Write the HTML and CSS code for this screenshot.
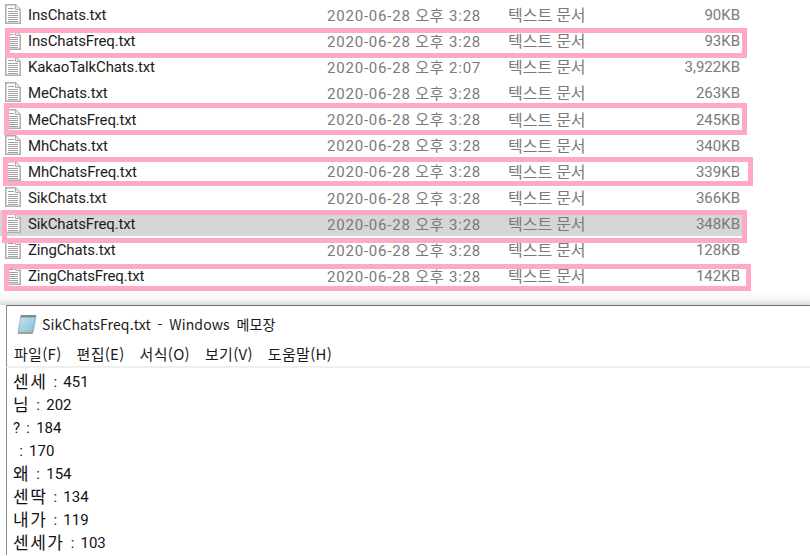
FILE: index.html
```html
<!DOCTYPE html>
<html lang="ko">
<head>
<meta charset="utf-8">
<title>SikChatsFreq.txt</title>
<link rel="stylesheet" href="styles.css">
</head>
<body>

<svg class="defs" width="0" height="0">
	<symbol id="txtIcon" viewBox="0 0 16 20">
		<path d="M.75.75H10.5L15.25 5.5V19.25H.75Z" fill="#fff" stroke="#adadad" stroke-width="1.5"/>
		<path d="M10.5 .75V5.5H15.25" fill="#e6e6e6" stroke="#adadad"/>
		<path d="M3 4.5H9M3 7.5H13M3 9.5H13M3 11.5H13M3 13.5H13M3 15.5H13M3 17.5H13" stroke="#a2a2a2"/>
	</symbol>
	<linearGradient id="padFill" x1="0" y1="0" x2="1" y2="1">
		<stop offset="0" stop-color="#cfe8f3"/>
		<stop offset="1" stop-color="#7fb6cd"/>
	</linearGradient>
</svg>

<div class="fileList">
	<div class="fileRow"><svg class="fileIcon"><use href="#txtIcon"/></svg><span class="fileName">InsChats.txt</span><span class="fileDate">2020-06-28 오후 3:28</span><span class="fileType">텍스트 문서</span><span class="fileSize">90KB</span></div>
	<div class="fileRow"><svg class="fileIcon"><use href="#txtIcon"/></svg><span class="fileName">InsChatsFreq.txt</span><span class="fileDate">2020-06-28 오후 3:28</span><span class="fileType">텍스트 문서</span><span class="fileSize">93KB</span></div>
	<div class="fileRow"><svg class="fileIcon"><use href="#txtIcon"/></svg><span class="fileName">KakaoTalkChats.txt</span><span class="fileDate">2020-06-28 오후 2:07</span><span class="fileType">텍스트 문서</span><span class="fileSize">3,922KB</span></div>
	<div class="fileRow"><svg class="fileIcon"><use href="#txtIcon"/></svg><span class="fileName">MeChats.txt</span><span class="fileDate">2020-06-28 오후 3:28</span><span class="fileType">텍스트 문서</span><span class="fileSize">263KB</span></div>
	<div class="fileRow"><svg class="fileIcon"><use href="#txtIcon"/></svg><span class="fileName">MeChatsFreq.txt</span><span class="fileDate">2020-06-28 오후 3:28</span><span class="fileType">텍스트 문서</span><span class="fileSize">245KB</span></div>
	<div class="fileRow"><svg class="fileIcon"><use href="#txtIcon"/></svg><span class="fileName">MhChats.txt</span><span class="fileDate">2020-06-28 오후 3:28</span><span class="fileType">텍스트 문서</span><span class="fileSize">340KB</span></div>
	<div class="fileRow"><svg class="fileIcon"><use href="#txtIcon"/></svg><span class="fileName">MhChatsFreq.txt</span><span class="fileDate">2020-06-28 오후 3:28</span><span class="fileType">텍스트 문서</span><span class="fileSize">339KB</span></div>
	<div class="fileRow"><svg class="fileIcon"><use href="#txtIcon"/></svg><span class="fileName">SikChats.txt</span><span class="fileDate">2020-06-28 오후 3:28</span><span class="fileType">텍스트 문서</span><span class="fileSize">366KB</span></div>
	<div class="fileRow fileRow-selected"><svg class="fileIcon"><use href="#txtIcon"/></svg><span class="fileName">SikChatsFreq.txt</span><span class="fileDate">2020-06-28 오후 3:28</span><span class="fileType">텍스트 문서</span><span class="fileSize">348KB</span></div>
	<div class="fileRow"><svg class="fileIcon"><use href="#txtIcon"/></svg><span class="fileName">ZingChats.txt</span><span class="fileDate">2020-06-28 오후 3:28</span><span class="fileType">텍스트 문서</span><span class="fileSize">128KB</span></div>
	<div class="fileRow"><svg class="fileIcon"><use href="#txtIcon"/></svg><span class="fileName">ZingChatsFreq.txt</span><span class="fileDate">2020-06-28 오후 3:28</span><span class="fileType">텍스트 문서</span><span class="fileSize">142KB</span></div>

	<!-- 사진 위에 그린 분홍 표시 -->
	<div class="mark mark-ins"></div>
	<div class="mark mark-me"></div>
	<div class="mark mark-mh"></div>
	<div class="mark mark-sik"></div>
	<div class="mark mark-zing"></div>
</div>

<div class="notepad">
	<div class="notepad-title">
		<svg class="notepad-icon" viewBox="0 0 20 20">
			<path d="M4 2H19L16 18.5H1Z" fill="url(#padFill)" stroke="#7fa9bc" stroke-width=".8"/>
			<path d="M3.8 1H19.2L18.7 3.5H3.3Z" fill="#7c8f99"/>
			<path d="M1 18.5H16L15.7 20H1Z" fill="#a59a7c"/>
			<path d="M5.5 6H16.5M5 9H16M4.5 12H15.5M4 15H15" stroke="#a9d2e3" stroke-width=".7"/>
		</svg>
		<span>SikChatsFreq.txt - Windows 메모장</span>
	</div>
	<div class="notepad-menu">
		<span>파일(F)</span>
		<span>편집(E)</span>
		<span>서식(O)</span>
		<span>보기(V)</span>
		<span>도움말(H)</span>
	</div>
	<div class="notepad-text">
		<div><span class="ko">센세</span> : 451</div>
		<div><span class="ko">님</span> : 202</div>
		<div>? : 184</div>
		<div>&nbsp;: 170</div>
		<div><span class="ko">왜</span> : 154</div>
		<div><span class="ko">센딱</span> : 134</div>
		<div><span class="ko">내가</span> : 119</div>
		<div><span class="ko">센세가</span> : 103</div>
	</div>
</div>

</body>
</html>
```

FILE: styles.css
```css
html, body { margin: 0; padding: 0; }
body {
	width: 810px;
	height: 556px;
	overflow: hidden;
	background: #fff;
	font-family: "Noto Sans CJK KR", "Noto Sans", sans-serif;
}
.defs { position: absolute; }

.fileList {
	position: relative;
	height: 291px;
	padding-top: 1px;
	box-sizing: border-box;
	background: #fff;
	font-family: Roboto, "Noto Sans CJK KR", sans-serif;
	font-size: 15px;
}
.fileRow {
	display: flex;
	align-items: center;
	height: 26.15px;
	padding-left: 5px;
	white-space: nowrap;
}
.fileRow-selected { background: #d6d6d6; margin-right: 68px; }
.fileIcon { width: 16px; height: 20px; flex: none; margin-right: 7px; }
.fileName { width: 299px; margin-top: 2px; color: #1c1c1c; letter-spacing: -.15px; }
.fileDate { width: 181px; color: #7a7a7a; letter-spacing: .8px; }
.fileType { width: 122px; color: #7a7a7a; font-size: 16px; }
.fileSize { width: 110px; margin-top: 2px; text-align: right; color: #7a7a7a; }

.mark { position: absolute; border: 5px solid #ffa9c6; box-sizing: border-box; }
.mark-ins { left: 5px; top: 28px; width: 742px; height: 30px; }
.mark-me { left: 4px; top: 103px; width: 743px; height: 32px; }
.mark-mh { left: 3px; top: 157px; width: 750px; height: 29px; }
.mark-sik { left: 2px; top: 210px; width: 745px; height: 33px; }
.mark-zing { left: 4px; top: 264px; width: 747px; height: 27px; }

.notepad {
	height: 265px;
	padding-top: 14px;
	box-sizing: border-box;
	background: linear-gradient(#fff, #f6f6f6 8px, #dcdcdc 14px, #fff 14px);
}
.notepad-title, .notepad-menu, .notepad-text { margin-left: 6px; border-left: 1px solid #8a8a8a; }
.notepad-title {
	display: flex;
	align-items: center;
	height: 35px;
	padding: 0 0 0 10px;
	border-top: 1px solid #6f6f6f;
	font-size: 14px;
	letter-spacing: .15px;
	word-spacing: 2.5px;
	color: #1a1a1a;
	background: #fff;
}
.notepad-icon { width: 20px; height: 20px; margin-right: 5px; }
.notepad-menu {
	display: flex;
	gap: 15px;
	height: 27px;
	padding: 0 0 1px 7px;
	box-sizing: border-box;
	align-items: center;
	font-size: 15px;
	letter-spacing: .3px;
	color: #1a1a1a;
	background: #fff;
	border-bottom: 2px solid #f0f0f0;
}
.notepad-text {
	padding: 3px 0 0 6px;
	font-family: Roboto, "Noto Sans CJK KR", sans-serif;
	font-size: 15px;
	line-height: 23px;
	word-spacing: 2.5px;
	color: #111;
	background: #fff;
}
.notepad-text .ko { font-size: 17px; line-height: 1; letter-spacing: 1.5px; vertical-align: -1px; }
```
